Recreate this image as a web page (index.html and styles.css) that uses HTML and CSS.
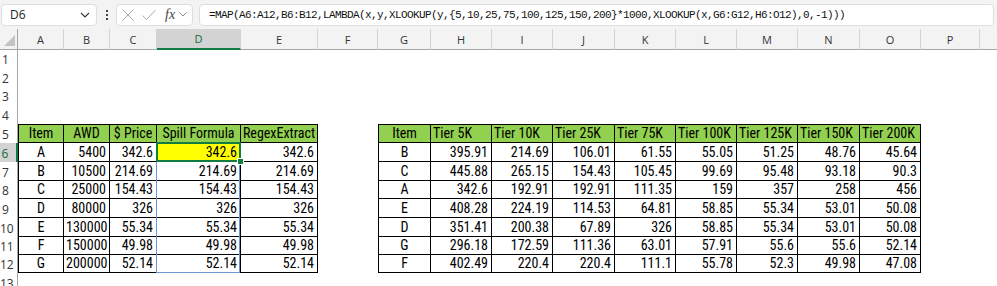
FILE: index.html
```html
<!DOCTYPE html>
<html>
<head>
<meta charset="utf-8">
<link rel="stylesheet" href="styles.css">
</head>
<body>
<div class="excel">
  <div class="toolbar">
    <div class="namebox">
      <span class="name">D6</span>
      <svg class="chev" width="10" height="6" viewBox="0 0 10 6"><path d="M1 1 L5 5 L9 1" fill="none" stroke="#333" stroke-width="1.1"/></svg>
    </div>
    <div class="kebab"><i></i><i></i><i></i></div>
    <div class="fxbox">
      <svg class="ico" width="14" height="14" viewBox="0 0 14 14"><path d="M1.5 1.5 L12.5 12.5 M12.5 1.5 L1.5 12.5" stroke="#a8a8a8" stroke-width="1"/></svg>
      <svg class="ico" width="16" height="14" viewBox="0 0 16 14"><path d="M1.5 7.5 L5.5 11.5 L14.5 2" fill="none" stroke="#a8a8a8" stroke-width="1"/></svg>
      <span class="fx">fx</span>
      <svg class="chev sm" width="8" height="5" viewBox="0 0 8 5"><path d="M0.5 0.5 L4 4 L7.5 0.5" fill="none" stroke="#888" stroke-width="1"/></svg>
    </div>
    <div class="formula">=MAP(A6:A12,B6:B12,LAMBDA(x,y,XLOOKUP(y,{5,10,25,75,100,125,150,200}*1000,XLOOKUP(x,G6:G12,H6:O12),0,-1)))</div>
  </div>
  <table class="grid">
    <colgroup>
      <col class="c-rh"><col class="c46"><col class="c46"><col class="c47"><col class="c84"><col class="c77"><col class="c60"><col class="c53"><col class="c61"><col class="c61"><col class="c62"><col class="c61"><col class="c61"><col class="c61"><col class="c62"><col class="c61"><col class="c59"><col class="c60">
    </colgroup>
    <thead>
      <tr class="colhdr">
        <th class="corner"><svg width="11" height="11" viewBox="0 0 11 11"><path d="M11 0 L11 11 L0 11 Z" fill="#c4c4c4"/></svg></th>
        <th>A</th><th>B</th><th>C</th><th class="active">D</th><th>E</th><th>F</th><th>G</th><th>H</th><th>I</th><th>J</th><th>K</th><th>L</th><th>M</th><th>N</th><th>O</th><th>P</th><th></th>
      </tr>
    </thead>
    <tbody>
      <tr class="h18"><th class="rh">1</th><td></td><td></td><td></td><td></td><td></td><td></td><td></td><td></td><td></td><td></td><td></td><td></td><td></td><td></td><td></td><td></td><td></td></tr>
      <tr class="h19"><th class="rh">2</th><td></td><td></td><td></td><td></td><td></td><td></td><td></td><td></td><td></td><td></td><td></td><td></td><td></td><td></td><td></td><td></td><td></td></tr>
      <tr class="h18"><th class="rh">3</th><td></td><td></td><td></td><td></td><td></td><td></td><td></td><td></td><td></td><td></td><td></td><td></td><td></td><td></td><td></td><td></td><td></td></tr>
      <tr class="h19"><th class="rh">4</th><td></td><td></td><td></td><td></td><td></td><td></td><td></td><td></td><td></td><td></td><td></td><td></td><td></td><td></td><td></td><td></td><td></td></tr>
      <tr class="h19 data hdr"><th class="rh">5</th><td class="ctr">Item</td><td class="ctr">AWD</td><td class="ctr">$ Price</td><td class="ctr">Spill Formula</td><td class="ctr">RegexExtract</td><td></td><td class="ctr">Item</td><td class="lft">Tier 5K</td><td class="lft">Tier 10K</td><td class="lft">Tier 25K</td><td class="lft">Tier 75K</td><td class="lft">Tier 100K</td><td class="lft">Tier 125K</td><td class="lft">Tier 150K</td><td class="lft">Tier 200K</td><td></td><td></td></tr>
      <tr class="h19 data"><th class="rh sel-row">6</th><td class="ctr">A</td><td>5400</td><td>342.6</td><td class="sel">342.6<span class="spill"></span><span class="handle"></span></td><td>342.6</td><td></td><td class="ctr">B</td><td>395.91</td><td>214.69</td><td>106.01</td><td>61.55</td><td>55.05</td><td>51.25</td><td>48.76</td><td>45.64</td><td></td><td></td></tr>
      <tr class="h19 data"><th class="rh">7</th><td class="ctr">B</td><td>10500</td><td>214.69</td><td>214.69</td><td>214.69</td><td></td><td class="ctr">C</td><td>445.88</td><td>265.15</td><td>154.43</td><td>105.45</td><td>99.69</td><td>95.48</td><td>93.18</td><td>90.3</td><td></td><td></td></tr>
      <tr class="h18 data"><th class="rh">8</th><td class="ctr">C</td><td>25000</td><td>154.43</td><td>154.43</td><td>154.43</td><td></td><td class="ctr">A</td><td>342.6</td><td>192.91</td><td>192.91</td><td>111.35</td><td>159</td><td>357</td><td>258</td><td>456</td><td></td><td></td></tr>
      <tr class="h19 data"><th class="rh">9</th><td class="ctr">D</td><td>80000</td><td>326</td><td>326</td><td>326</td><td></td><td class="ctr">E</td><td>408.28</td><td>224.19</td><td>114.53</td><td>64.81</td><td>58.85</td><td>55.34</td><td>53.01</td><td>50.08</td><td></td><td></td></tr>
      <tr class="h19 data"><th class="rh">10</th><td class="ctr">E</td><td>130000</td><td>55.34</td><td>55.34</td><td>55.34</td><td></td><td class="ctr">D</td><td>351.41</td><td>200.38</td><td>67.89</td><td>326</td><td>58.85</td><td>55.34</td><td>53.01</td><td>50.08</td><td></td><td></td></tr>
      <tr class="h18 data"><th class="rh">11</th><td class="ctr">F</td><td>150000</td><td>49.98</td><td>49.98</td><td>49.98</td><td></td><td class="ctr">G</td><td>296.18</td><td>172.59</td><td>111.36</td><td>63.01</td><td>57.91</td><td>55.6</td><td>55.6</td><td>52.14</td><td></td><td></td></tr>
      <tr class="h18 data"><th class="rh">12</th><td class="ctr">G</td><td>200000</td><td>52.14</td><td>52.14</td><td>52.14</td><td></td><td class="ctr">F</td><td>402.49</td><td>220.4</td><td>220.4</td><td>111.1</td><td>55.78</td><td>52.3</td><td>49.98</td><td>47.08</td><td></td><td></td></tr>
      <tr class="h19"><th class="rh">13</th><td></td><td></td><td></td><td></td><td></td><td></td><td></td><td></td><td></td><td></td><td></td><td></td><td></td><td></td><td></td><td></td><td></td></tr>
    </tbody>
  </table>
</div>
</body>
</html>
```
FILE: styles.css
```css
html, body {
  margin: 0;
  padding: 0;
  background: #ffffff;
}
body {
  width: 997px;
  height: 286px;
  overflow: hidden;
}
.excel {
  width: 997px;
  height: 286px;
  overflow: hidden;
}

/* ---------- formula bar ---------- */
.toolbar {
  display: flex;
  align-items: center;
  height: 29px;
  background: #f3f3f3;
  box-sizing: border-box;
  padding: 0 0 0 1px;
}
.namebox {
  width: 96px;
  height: 22px;
  box-sizing: border-box;
  background: #fff;
  border: 1px solid #dedede;
  border-radius: 4px;
  display: flex;
  align-items: center;
  justify-content: space-between;
  padding: 0 6px 0 8px;
}
.name {
  font-family: "Open Sans", "Noto Sans", sans-serif;
  font-size: 12px;
  color: #222;
}
.kebab {
  width: 19px;
  height: 22px;
  display: flex;
  flex-direction: column;
  align-items: center;
  justify-content: center;
  gap: 2px;
}
.kebab i {
  display: block;
  width: 2px;
  height: 2px;
  background: #444;
}
.fxbox {
  width: 77px;
  height: 22px;
  box-sizing: border-box;
  background: #fff;
  border: 1px solid #dedede;
  border-radius: 4px;
  display: flex;
  align-items: center;
  padding: 0 0 0 4px;
}
.fxbox .ico {
  display: block;
  margin-right: 6px;
}
.fx {
  font-family: "Liberation Serif", "DejaVu Serif", serif;
  font-style: italic;
  font-size: 14px;
  color: #444;
  margin: 0 4px 0 2px;
}
.chev { display: block; }
.formula {
  flex: 1;
  margin: 0 3px 0 6px;
  height: 22px;
  box-sizing: border-box;
  background: #fff;
  border: 1px solid #dedede;
  border-radius: 4px;
  padding: 0 0 0 9px;
  font-family: "Liberation Mono", "DejaVu Sans Mono", monospace;
  font-size: 11px;
  letter-spacing: -0.6px;
  line-height: 20px;
  color: #111;
  white-space: nowrap;
  overflow: hidden;
}

/* ---------- grid ---------- */
.grid {
  border-collapse: separate;
  border-spacing: 0;
  table-layout: fixed;
  width: 1040px;
  font-family: "Roboto Condensed", "Roboto", sans-serif;
  font-size: 14px;
  color: #000;
}
.c-rh { width: 18px; }
.c46 { width: 46px; }
.c47 { width: 47px; }
.c53 { width: 53px; }
.c59 { width: 59px; }
.c60 { width: 60px; }
.c61 { width: 61px; }
.c62 { width: 62px; }
.c77 { width: 77px; }
.c84 { width: 84px; }

.colhdr th {
  height: 21px;
  box-sizing: border-box;
  padding: 0;
  background: #f3f3f3;
  border-right: 1px solid #d2d2d2;
  border-bottom: 1px solid #a6a6a6;
  font-family: "Open Sans", "Noto Sans", sans-serif;
  font-weight: normal;
  font-size: 11px;
  color: #333;
  text-align: center;
  vertical-align: middle;
}
.colhdr th.corner {
  text-align: right;
  vertical-align: bottom;
  padding: 0 2px 3px 0;
  border-right: 1px solid #a6a6a6;
}
.colhdr th.corner svg { display: block; margin-left: auto; }
.colhdr th.active {
  background: #d3d3d3;
  border-bottom: 2px solid #107c41;
  color: #0e6b36;
}

.h18 { height: 18px; }
.h19 { height: 19px; }

.rh {
  padding: 1px 6px 0 0;
  background: #fff;
  border-right: 1px solid #a6a6a6;
  font-family: "Open Sans", "Noto Sans", sans-serif;
  font-weight: normal;
  font-size: 12px;
  color: #333;
  text-align: center;
  vertical-align: middle;
}
.rh.sel-row {
  background: #d3d3d3;
  border-right: 2px solid #107c41;
  color: #0e6b36;
}

.grid td {
  padding: 0 3px 1px 2px;
  white-space: nowrap;
  overflow: hidden;
  text-align: right;
  vertical-align: bottom;
  line-height: 16px;
}
.grid td.ctr { text-align: center; padding: 0 0 1px 0; overflow: visible; }
.grid td.lft { text-align: left; }

/* bordered data tables: columns A-E (children 2-6) and G-O (children 8-16) */
.data td:nth-child(n+2):nth-child(-n+6),
.data td:nth-child(n+8):nth-child(-n+16) {
  border-right: 1px solid #000;
  border-bottom: 1px solid #000;
}
.data td:nth-child(2),
.data td:nth-child(8) {
  border-left: 1px solid #000;
}
.hdr td:nth-child(n+2):nth-child(-n+6),
.hdr td:nth-child(n+8):nth-child(-n+16) {
  background: #92d050;
  border-top: 1px solid #000;
}

/* selected, spilled cell */
.grid td.sel {
  position: relative;
  overflow: visible;
  background: #ffff00;
}
.sel .spill {
  position: absolute;
  left: -1px;
  top: -1px;
  width: 84px;
  height: 131px;
  box-sizing: border-box;
  border: 1px solid #6f95d8;
  pointer-events: none;
}
.sel::after {
  content: "";
  position: absolute;
  left: -1px;
  top: -1px;
  right: -1px;
  bottom: -1px;
  border: 2px solid #107c41;
}
.sel .handle {
  position: absolute;
  right: -4px;
  bottom: -4px;
  width: 5px;
  height: 5px;
  background: #107c41;
  border: 1px solid #fff;
  z-index: 2;
}
```
